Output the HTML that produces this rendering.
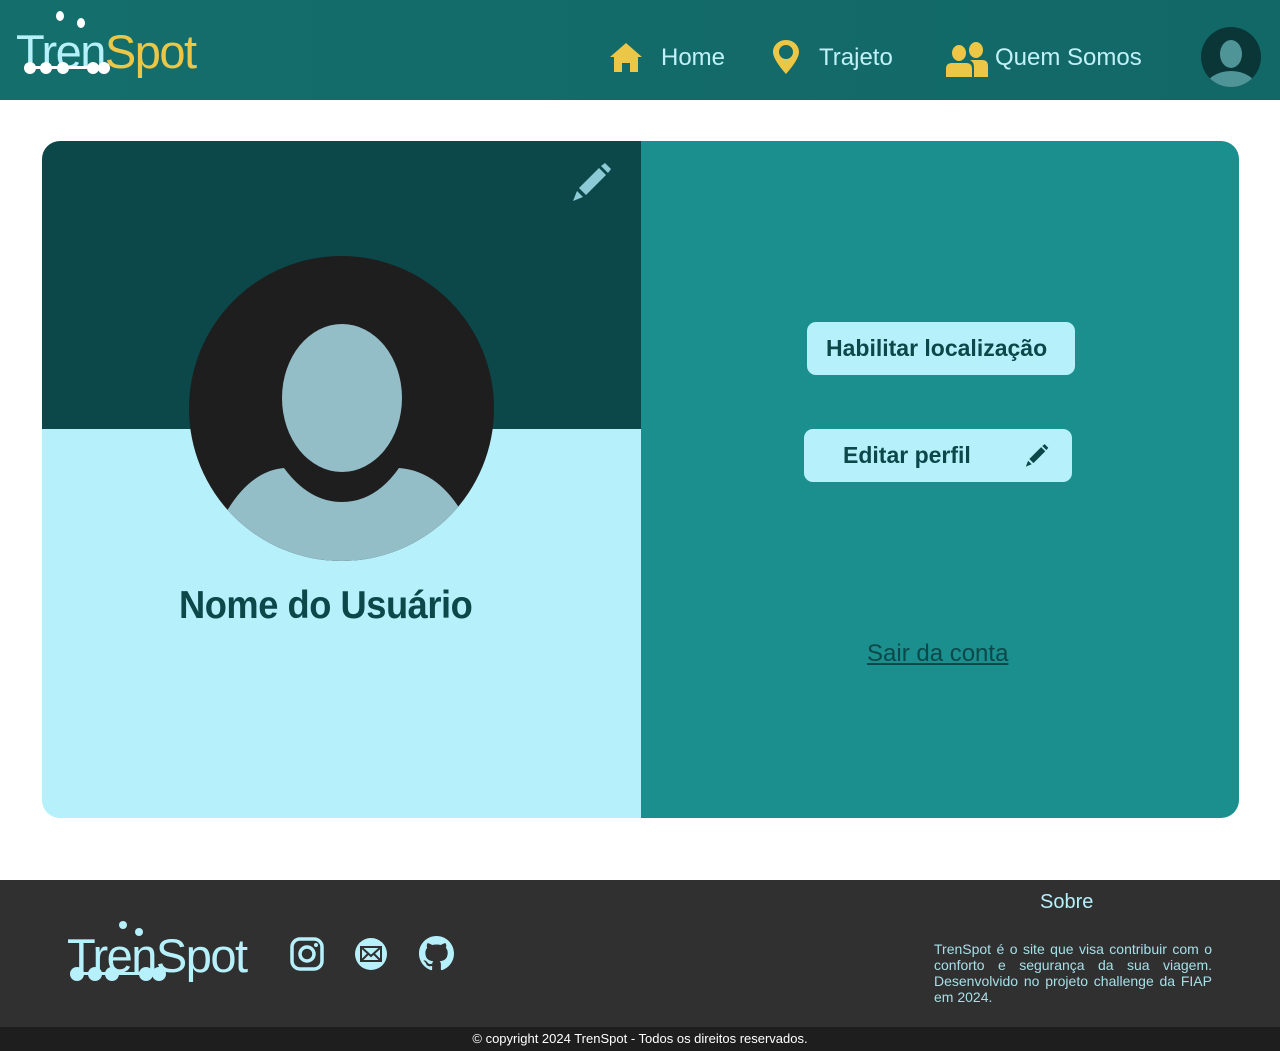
<!DOCTYPE html>
<html><head><meta charset="utf-8"><style>
*{margin:0;padding:0;box-sizing:border-box}
body{width:1280px;height:1051px;background:#fff;font-family:"Liberation Sans",sans-serif;position:relative;overflow:hidden}
.hdr{position:absolute;left:0;top:0;width:1280px;height:100px;background:linear-gradient(90deg,#146e6c,#126866)}
.nav{position:absolute;top:44px;font-size:24px;color:#c0f0f8;white-space:nowrap}
.abs{position:absolute}
.btn{position:absolute;background:#b6f0fb;border-radius:9px;color:#0c4849;font-weight:bold;font-size:23px;display:flex;align-items:center}
</style></head><body>
<div class="hdr">
  <div class="abs" style="left:16px;top:24px;font-size:47px;line-height:56px;letter-spacing:-1.5px"><span style="color:#b6f0fb">Tren</span><span style="color:#ecc646">Spot</span></div>
  <svg class="abs" style="left:0;top:0" width="220" height="100"><g fill="#fff"><ellipse cx="60" cy="16" rx="4" ry="5"/><ellipse cx="81" cy="23" rx="4" ry="5"/><circle cx="30" cy="68" r="6"/><circle cx="46" cy="68" r="6"/><circle cx="63" cy="68" r="6"/><circle cx="93" cy="68" r="6"/><circle cx="104" cy="68" r="6"/><rect x="30" y="66" width="74" height="3"/></g></svg>
  <svg class="abs" style="left:610px;top:43px" width="32" height="29" viewBox="0 0 32 29"><path d="M16 0L32 14H28V29H20V20H12V29H4V14H0Z" fill="#ecc646"/></svg>
  <div class="nav" style="left:661px">Home</div>
  <svg class="abs" style="left:773px;top:40px" width="26" height="34" viewBox="0 0 26 34"><path d="M13 0C5 0 0 6 0 12c0 8 13 22 13 22s13-14 13-22C26 6 21 0 13 0zm0 19a7 7 0 1 1 0-14 7 7 0 0 1 0 14z" fill="#ecc646"/></svg>
  <div class="nav" style="left:819px">Trajeto</div>
  <svg class="abs" style="left:946px;top:41px" width="42" height="36" viewBox="0 0 42 36"><g fill="#ecc646"><ellipse cx="13" cy="12" rx="7" ry="8"/><ellipse cx="30" cy="9" rx="7" ry="8"/><path d="M0 36V28q0-6 6-6h14q6 0 6 6v8z"/><path d="M28 36V26q0-5-4-7h12q6 0 6 6v11z"/></g></svg>
  <div class="nav" style="left:995px">Quem Somos</div>
  <svg class="abs" style="left:1201px;top:27px" width="60" height="60" viewBox="0 0 60 60"><defs><clipPath id="c1"><circle cx="30" cy="30" r="30"/></clipPath></defs><circle cx="30" cy="30" r="30" fill="#0b3638"/><g clip-path="url(#c1)" fill="#4f9496"><ellipse cx="30" cy="27" rx="11" ry="14"/><ellipse cx="30" cy="62" rx="26" ry="18"/></g></svg>
</div>

<div class="abs" style="left:42px;top:141px;width:1197px;height:677px;border-radius:18px;overflow:hidden">
  <div class="abs" style="left:0;top:0;width:599px;height:288px;background:#0c4849"></div>
  <div class="abs" style="left:0;top:288px;width:599px;height:389px;background:#b6f0fb"></div>
  <div class="abs" style="left:599px;top:0;width:598px;height:677px;background:#1b8f8d"></div>
</div>
<svg class="abs" style="left:570px;top:162px" width="44" height="42" viewBox="0 0 44 42"><g fill="#8ccbd6"><path d="M31 4l4-3 6 6-3 4z"/><path d="M29 6l7 7-20 20-7-7z"/><path d="M7 29l6 6-10 4z"/></g></svg>
<svg class="abs" style="left:189px;top:256px" width="305" height="305" viewBox="0 0 305 305"><defs><clipPath id="c2"><circle cx="152.5" cy="152.5" r="152.5"/></clipPath></defs><circle cx="152.5" cy="152.5" r="152.5" fill="#1e1e1e"/><g clip-path="url(#c2)" fill="#93bdc7"><ellipse cx="153" cy="142" rx="60" ry="74"/><path d="M35 260Q60 215 95 212Q120 246 153 246Q186 246 210 212Q250 215 275 260L280 310H30Z"/></g></svg>
<div class="abs" style="left:179px;top:584px;font-size:39px;color:#0c4849;white-space:nowrap;font-weight:bold;letter-spacing:-0.5px;transform:scaleX(0.93);transform-origin:left">Nome do Usuário</div>

<div class="btn" style="left:807px;top:322px;width:268px;height:53px;padding-left:19px">Habilitar localização</div>
<div class="btn" style="left:804px;top:429px;width:268px;height:53px;padding-left:39px">Editar perfil
<svg class="abs" style="left:220px;top:14px" width="26" height="26" viewBox="0 0 44 42"><g fill="#0c4849"><path d="M31 4l4-3 6 6-3 4z"/><path d="M29 6l7 7-20 20-7-7z"/><path d="M7 29l6 6-10 4z"/></g></svg></div>
<div class="abs" style="left:867px;top:640px;font-size:24px;color:#0c4849;text-decoration:underline">Sair da conta</div>

<div class="abs" style="left:0;top:880px;width:1280px;height:147px;background:#303030"></div>
<div class="abs" style="left:67px;top:928px;font-size:47px;line-height:56px;color:#b6f0fb;letter-spacing:-1.5px">TrenSpot</div>
<svg class="abs" style="left:60px;top:915px" width="200" height="70"><g fill="#b6f0fb"><circle cx="63" cy="10" r="4"/><circle cx="79" cy="17" r="4"/><circle cx="17" cy="59" r="7"/><circle cx="35" cy="59" r="7"/><circle cx="52" cy="59" r="7"/><circle cx="86" cy="59" r="7"/><circle cx="99" cy="59" r="7"/><rect x="17" y="57" width="82" height="3"/></g></svg>
<svg class="abs" style="left:290px;top:937px" width="34" height="34" viewBox="0 0 34 34"><rect x="2" y="2" width="30" height="30" rx="8" fill="none" stroke="#b6f0fb" stroke-width="3.5"/><circle cx="17" cy="17" r="7" fill="none" stroke="#b6f0fb" stroke-width="3.5"/><circle cx="26" cy="8" r="2" fill="#b6f0fb"/></svg>
<svg class="abs" style="left:354px;top:937px" width="34" height="34" viewBox="0 0 34 34"><circle cx="17" cy="17" r="16" fill="#b6f0fb"/><rect x="7" y="10" width="20" height="14" fill="none" stroke="#303030" stroke-width="2"/><path d="M7 10l10 9 10-9M7 24l7-7M27 24l-7-7" fill="none" stroke="#303030" stroke-width="2"/></svg>
<svg class="abs" style="left:419px;top:936px" width="35" height="35" viewBox="0 0 16 16"><path fill="#b6f0fb" d="M8 0C3.58 0 0 3.58 0 8c0 3.54 2.29 6.53 5.47 7.59.4.07.55-.17.55-.38 0-.19-.01-.82-.01-1.49-2.01.37-2.530-.49-2.69-.94-.09-.23-.48-.94-.82-1.13-.28-.15-.68-.52-.01-.53.63-.01 1.08.58 1.23.82.72 1.21 1.87.87 2.33.66.07-.52.28-.87.51-1.07-1.78-.2-3.64-.89-3.64-3.95 0-.87.31-1.59.82-2.15-.08-.2-.36-1.02.08-2.12 0 0 .67-.21 2.2.82.64-.18 1.32-.27 2-.27.68 0 1.36.09 2 .27 1.53-1.04 2.2-.82 2.2-.82.44 1.1.16 1.92.08 2.12.51.56.82 1.27.82 2.15 0 3.07-1.87 3.75-3.65 3.95.29.25.54.73.54 1.48 0 1.07-.01 1.93-.01 2.2 0 .21.15.46.55.38A8.013 8.013 0 0 0 16 8c0-4.42-3.58-8-8-8z"/></svg>
<div class="abs" style="left:1040px;top:891px;font-size:20px;color:#b6f0fb">Sobre</div>
<div class="abs" style="left:934px;top:941px;width:278px;font-size:14px;line-height:16px;color:#a8dfe8;text-align:justify">TrenSpot é o site que visa contribuir com o conforto e segurança da sua viagem. Desenvolvido no projeto challenge da FIAP em 2024.</div>
<div class="abs" style="left:0;top:1027px;width:1280px;height:24px;background:#1e1e1e;color:#fff;font-size:13px;text-align:center;line-height:24px">© copyright 2024 TrenSpot - Todos os direitos reservados.</div>
</body></html>
